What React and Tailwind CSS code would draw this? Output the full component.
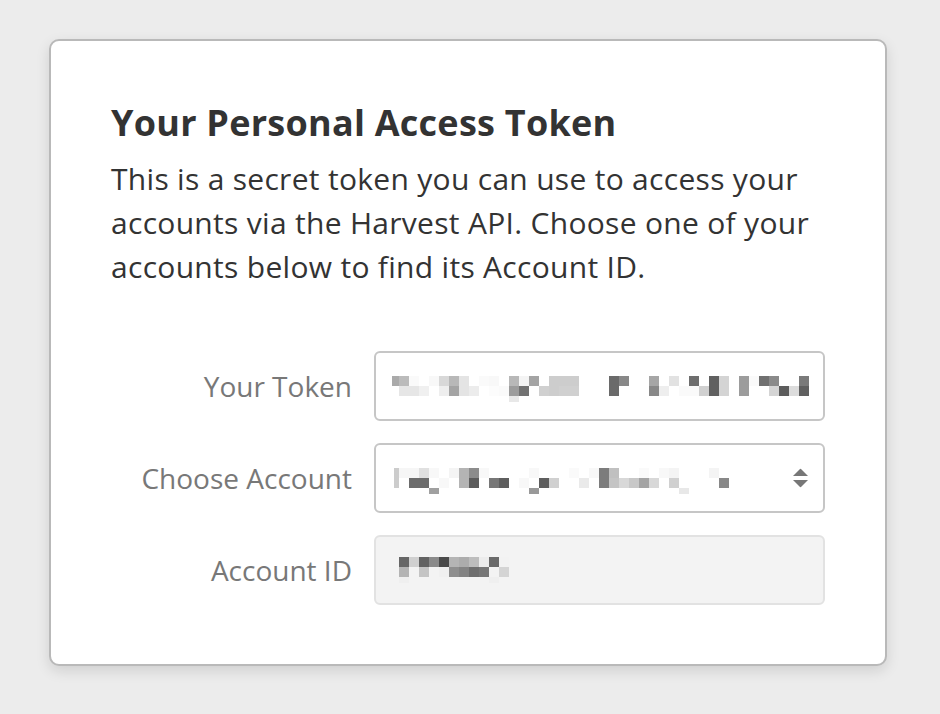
import React from 'react';

const W = '#ffffff';

// blurred token / account names, 10px cells starting at x = 0
const tokenRows = [
  ['#aaaaaa', '#bbbbbb', '#fafafa', W, '#f8f8f8', '#d8d8d8', '#b8b8b8', '#e4e4e4', W, '#fafafa', '#f8f8f8', W, '#b8b8b8', '#f4f4f4', '#a4a4a4', W, '#cdcdcd', '#cdcdcd', '#cdcdcd', W, W, W, '#6a6a6a', '#888888', W, W, '#a6a6a6', W, '#e2e2e2', W, '#6e6e6e', W, '#606060', '#d4d4d4', W, '#9c9c9c', '#fafafa', '#707070', '#8a8a8a', W, W, '#7a7a7a'],
  [W, '#e6e6e6', '#e6e6e6', '#f0f0f0', W, '#eeeeee', '#a4a4a4', '#e4e4e4', '#ececec', W, '#fcfcfc', '#fafafa', '#9c9c9c', '#727272', W, '#d0d0d0', '#cdcdcd', '#d0d0d0', '#d0d0d0', W, W, W, '#6a6a6a', W, W, W, '#888888', '#eeeeee', W, '#fafafa', '#fafafa', '#d0d0d0', '#606060', '#d4d4d4', W, '#9c9c9c', W, W, '#d4d4d4', '#5c5c5c', '#dcdcdc', '#606060'],
];
const tokenExtra = [[12, '#e8e8e8']];

const accountRows = [
  ['#cccccc', '#f6f6f6', '#f6f6f6', '#e0e0e0', '#f8f8f8', W, '#f4f4f4', '#b4b4b4', '#8c8c8c', '#f8f8f8', W, W, W, W, '#f8f8f8', W, W, W, '#fafafa', W, '#f8f8f8', '#7c7c7c', '#c0c0c0', W, W, '#fafafa', W, '#f8f8f8', '#f4f4f4', W, W, W, '#f4f4f4', W],
  ['#cccccc', W, '#6c6c6c', '#6c6c6c', W, '#f8f8f8', W, '#b4b4b4', '#5c5c5c', W, '#777777', '#5e5e5e', W, '#f8f8f8', W, '#5e5e5e', '#d0d0d0', W, W, '#eaeaea', W, '#7c7c7c', '#c4c4c4', '#d8d8d8', '#c8c8c8', '#a4a4a4', '#d8d8d8', W, '#d0d0d0', W, W, W, W, '#888888'],
];
const accountExtra = [[4, '#a0a0a0'], [14, '#999999'], [29, '#e8e8e8']];

const idRows = [
  ['#666666', '#d0d0d0', '#626262', '#8a8a8a', '#4a4a4a', '#b4b4b4', '#acacac', '#bdbdbd', '#ececec', '#6a6a6a', '#f2f2f2'],
  ['#b4b4b4', null, '#c4c4c4', null, '#f0f0f0', '#8e8e8e', '#838383', '#6e6e6e', '#777777', null, '#d4d4d4'],
];
const idExtra = [[0, '#efefef'], [9, '#efefef']];

function Blur({ rows, extra = [], skip = 0, className = '' }) {
  const cols = rows[0].length;
  return (
    <svg width={cols * 10} height="20" viewBox={`0 0 ${cols * 10} 20`} className={`overflow-visible shrink-0 ${className}`}>
      {rows.map((row, r) =>
        row.map((c, i) =>
          c && c !== W ? (
            <rect key={`${r}-${i}`} x={i === 0 ? skip : i * 10} y={r * 10} width={i === 0 ? 10 - skip : 10} height="10" fill={c} />
          ) : null
        )
      )}
      {extra.map(([i, c]) => (
        <rect key={`x-${i}`} x={i * 10} y="20" width="10" height="6" fill={c} />
      ))}
    </svg>
  );
}

function Row({ label, children }) {
  return (
    <div className="flex items-center gap-[22px]">
      <div className="w-[241px] shrink-0 text-right text-[28px] text-[#787878] whitespace-nowrap">{label}</div>
      {children}
    </div>
  );
}

export default function App() {
  return (
    <div className="min-h-screen bg-[#ececec] pt-[39px] pl-[49px]" style={{ fontFamily: '"Open Sans", Lato, sans-serif' }}>
      <div className="w-[838px] h-[627px] bg-white border-2 border-[#b9b9b9] rounded-[10px] shadow-[0_5px_14px_rgba(0,0,0,0.12)] px-[60px] pt-[60px]">
        <h1 className="text-[36px] leading-[44px] font-bold text-[#333333] tracking-[0.25px]">Your Personal Access Token</h1>
        <p className="mt-[12px] text-[30px] leading-[44px] text-[#333333] tracking-[0.3px]">
          This is a secret token you can use to access your accounts via the Harvest API. Choose one of your accounts below to find its Account ID.
        </p>

        <div className="mt-[62px] flex flex-col gap-[22px]">
          <Row label="Your Token">
            <div className="w-[451px] h-[70px] border-2 border-[#c6c6c6] rounded-[6px] bg-white flex items-center pl-[13px] overflow-hidden">
              <Blur rows={tokenRows} extra={tokenExtra} skip={3} />
            </div>
          </Row>
          <Row label="Choose Account">
            <div className="relative w-[451px] h-[70px] border-2 border-[#c6c6c6] rounded-[6px] bg-white flex items-center pl-[13px]">
              <Blur rows={accountRows} extra={accountExtra} skip={5} />
              <svg className="absolute right-[15px] top-1/2 -translate-y-1/2" width="15" height="19" viewBox="0 0 15 19">
                <path d="M7.5 0 L15 7.5 L0 7.5 Z" fill="#777777" />
                <path d="M0 11.5 L15 11.5 L7.5 19 Z" fill="#777777" />
              </svg>
            </div>
          </Row>
          <Row label="Account ID">
            <div className="w-[451px] h-[70px] border-2 border-[#e2e2e2] rounded-[6px] bg-[#f3f3f3] flex items-center pl-[23px]">
              <Blur rows={idRows} extra={idExtra} className="-mt-[6px]" />
            </div>
          </Row>
        </div>
      </div>
    </div>
  );
}
